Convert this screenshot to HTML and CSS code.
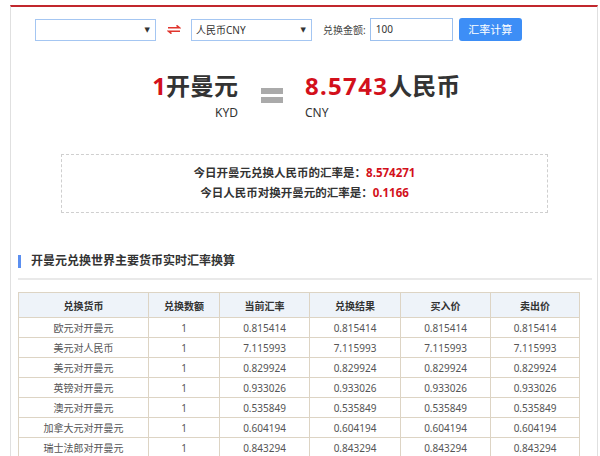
FILE: index.html
```html
<!DOCTYPE html>
<html lang="zh-CN">
<head>
<meta charset="utf-8">
<title>开曼元兑换人民币</title>
<link rel="stylesheet" href="styles.css">
</head>
<body>
<div class="wrap">
  <div class="form">
    <div class="sel sel1"><span class="sel-text"></span><span class="caret">▼</span></div>
    <svg class="swap" width="14" height="9" viewBox="0 0 14 9"><path d="M1 2.8H12.5L9.5 0.3" fill="none" stroke="#e0352d" stroke-width="1.5"/><path d="M13 6.2H1.5L4.5 8.7" fill="none" stroke="#e0352d" stroke-width="1.5"/></svg>
    <div class="sel sel2"><span class="sel-text">人民币CNY</span><span class="caret">▼</span></div>
    <span class="label">兑换金额:</span>
    <div class="amount">100</div>
    <div class="btn">汇率计算</div>
  </div>

  <div class="result">
    <div class="side left">
      <div class="big"><span class="red">1</span>开曼元</div>
      <div class="code">KYD</div>
    </div>
    <div class="eq"><i></i><i></i></div>
    <div class="side right">
      <div class="big"><span class="red num">8.5743</span>人民币</div>
      <div class="code">CNY</div>
    </div>
  </div>

  <div class="info">
    <p>今日开曼元兑换人民币的汇率是：<span class="red">8.574271</span></p>
    <p>今日人民币对换开曼元的汇率是：<span class="red">0.1166</span></p>
  </div>

  <h2 class="title">开曼元兑换世界主要货币实时汇率换算</h2>

  <table class="rates">
    <colgroup><col class="c1"><col class="c2"><col class="c3"><col class="c4"><col class="c5"><col class="c6"></colgroup>
    <thead>
      <tr><th>兑换货币</th><th>兑换数额</th><th>当前汇率</th><th>兑换结果</th><th>买入价</th><th>卖出价</th></tr>
    </thead>
    <tbody>
      <tr><td>欧元对开曼元</td><td>1</td><td>0.815414</td><td>0.815414</td><td>0.815414</td><td>0.815414</td></tr>
      <tr><td>美元对人民币</td><td>1</td><td>7.115993</td><td>7.115993</td><td>7.115993</td><td>7.115993</td></tr>
      <tr><td>美元对开曼元</td><td>1</td><td>0.829924</td><td>0.829924</td><td>0.829924</td><td>0.829924</td></tr>
      <tr><td>英镑对开曼元</td><td>1</td><td>0.933026</td><td>0.933026</td><td>0.933026</td><td>0.933026</td></tr>
      <tr><td>澳元对开曼元</td><td>1</td><td>0.535849</td><td>0.535849</td><td>0.535849</td><td>0.535849</td></tr>
      <tr><td>加拿大元对开曼元</td><td>1</td><td>0.604194</td><td>0.604194</td><td>0.604194</td><td>0.604194</td></tr>
      <tr><td>瑞士法郎对开曼元</td><td>1</td><td>0.843294</td><td>0.843294</td><td>0.843294</td><td>0.843294</td></tr>
    </tbody>
  </table>
</div>
</body>
</html>
```

FILE: styles.css
```css
html, body {
  margin: 0;
  padding: 0;
  background: #fff;
}
body {
  font-family: "Noto Sans", "Noto Sans CJK SC", sans-serif;
  color: #333;
}
.wrap {
  margin: 5px 2px 0 10px;
  border-top: 2px solid #c1272d;
  border-left: 1px solid #e0e0e0;
  border-right: 1px solid #e0e0e0;
  height: 600px;
}
.red { color: #d3101b; }

/* form row */
.form {
  display: flex;
  align-items: center;
  padding: 11px 0 0 24px;
  height: 23px;
}
.sel {
  box-sizing: border-box;
  width: 121px;
  height: 22px;
  border: 1px solid #a4c6f2;
  display: flex;
  align-items: center;
  justify-content: space-between;
  padding: 0 5px 0 4px;
  font-size: 10px;
  color: #333;
}
.caret {
  font-size: 7px;
  color: #333;
  font-family: "DejaVu Sans", sans-serif;
}
.swap {
  margin: 0 10px 0 11px;
  display: block;
}
.label {
  font-size: 10px;
  color: #444;
  margin: 0 4px 0 11px;
}
.amount {
  box-sizing: border-box;
  width: 83px;
  height: 23px;
  border: 1px solid #9cc0ee;
  font-size: 10px;
  line-height: 21px;
  padding-left: 5px;
  color: #333;
}
.btn {
  box-sizing: border-box;
  width: 63px;
  height: 23px;
  margin-left: 6px;
  background: #3d8ef6;
  border-radius: 3px;
  color: #fff;
  font-size: 11px;
  line-height: 23px;
  text-align: center;
}

/* big result */
.result {
  display: flex;
  margin-top: 31px;
}
.side.left {
  width: 227px;
  text-align: right;
}
.big {
  font-size: 24px;
  font-weight: bold;
  line-height: 28px;
  color: #333;
  white-space: nowrap;
}
.big .num {
  letter-spacing: 1.3px;
}
.code {
  font-size: 12px;
  line-height: 16px;
  margin-top: 5px;
  color: #333;
}
.eq {
  width: 22px;
  margin: 16px 22px 0 23px;
  display: flex;
  flex-direction: column;
  gap: 3px;
}
.eq i {
  display: block;
  height: 6px;
  background: #aaaaaa;
}

/* info box */
.info {
  box-sizing: border-box;
  width: 487px;
  height: 59px;
  margin: 33px 0 0 50px;
  border: 1px dashed #cfcfcf;
  padding-top: 8px;
  text-align: center;
}
.info p {
  margin: 0;
  font-size: 11.5px;
  line-height: 20px;
  font-weight: bold;
  color: #333;
}

/* heading */
.title {
  margin: 41px 5px 0 7px;
  padding: 0 0 10px 0;
  border-bottom: 2px solid #e9e9e9;
  font-size: 12px;
  line-height: 14px;
  font-weight: bold;
  color: #333;
  display: flex;
  align-items: center;
}
.title::before {
  content: "";
  width: 3px;
  height: 13px;
  background: #5b8ff0;
  margin-right: 10px;
}

/* table */
.rates {
  margin: 12px 0 0 7px;
  border-collapse: collapse;
  table-layout: fixed;
  width: 561px;
  font-size: 10px;
}
.c1 { width: 130px; }
.c2 { width: 71px; }
.c3 { width: 90px; }
.c4 { width: 91px; }
.c5 { width: 90px; }
.c6 { width: 89px; }
.rates th, .rates td {
  border: 1px solid #ddd4c4;
  text-align: center;
  padding: 0;
}
.rates th {
  height: 24px;
  background: #eef3f9;
  font-weight: bold;
  color: #333;
}
.rates td {
  height: 19px;
  color: #555;
}
```
